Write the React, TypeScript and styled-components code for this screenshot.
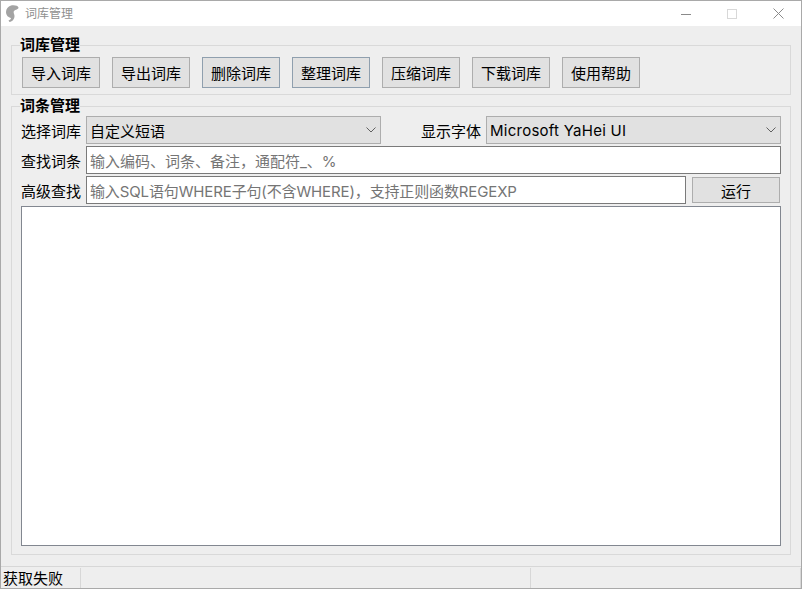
import styled, { createGlobalStyle } from 'styled-components';

const FONT = 'Inter, "Noto Sans CJK SC", sans-serif';

const GlobalStyle = createGlobalStyle`
  html, body {
    margin: 0;
    padding: 0;
    background: #ffffff;
  }
`;

const Frame = styled.div`
  width: 802px;
  height: 589px;
  box-sizing: border-box;
  border: 1px solid #a9a9a9;
  display: flex;
  flex-direction: column;
  background: #eeeeee;
  font-family: ${FONT};
  font-size: 15px;
  color: #000000;
  overflow: hidden;
`;

const TitleBar = styled.div`
  height: 25px;
  flex: none;
  background: #ffffff;
  display: flex;
  align-items: center;
  padding-left: 4px;
`;

const TitleText = styled.span`
  font-size: 12px;
  color: #8f8f8f;
  margin-left: 6px;
  padding-bottom: 2px;
  flex: 1;
`;

const WindowButton = styled.div`
  width: 46px;
  height: 25px;
  display: flex;
  align-items: center;
  justify-content: center;
`;

const Body = styled.div`
  flex: 1;
  min-height: 0;
  padding: 10px 10px 11px 10px;
  display: flex;
  flex-direction: column;
  gap: 2px;
`;

const Group = styled.fieldset<{ $grow?: boolean }>`
  margin: 0;
  padding: 0 9px 6px 9px;
  border: 1px solid #d9d9d9;
  min-width: 0;
  display: flex;
  flex-direction: column;
  ${({ $grow }) => ($grow ? 'flex: 1; min-height: 0; padding-bottom: 8px;' : '')}
`;

const Legend = styled.legend`
  font-size: 15px;
  font-weight: 700;
  line-height: 18px;
  padding: 0;
  margin-left: -1px;
  white-space: nowrap;
`;

const Toolbar = styled.div`
  display: flex;
  gap: 12px;
  padding: 3px 0 0 1px;
`;

const Button = styled.button<{ $focus?: boolean }>`
  width: 78px;
  height: 31px;
  box-sizing: border-box;
  border: 1px solid ${({ $focus }) => ($focus ? '#8f9fae' : '#adadad')};
  background: #e1e1e1;
  font: inherit;
  color: #000000;
  padding: 0;
`;

const Rows = styled.div`
  flex: 1;
  min-height: 0;
  display: flex;
  flex-direction: column;
  gap: 2px;
  padding-top: 1px;
`;

const Row = styled.div`
  display: flex;
  align-items: center;
  height: 28px;
  flex: none;
`;

const Label = styled.span<{ $gap?: number }>`
  width: 65px;
  flex: none;
  margin-left: ${({ $gap }) => $gap ?? 0}px;
  white-space: nowrap;
`;

const Combo = styled.div`
  width: 295px;
  height: 28px;
  box-sizing: border-box;
  flex: none;
  border: 1px solid #adadad;
  background: #e1e1e1;
  display: flex;
  align-items: center;
  justify-content: space-between;
  padding: 0 4px 0 3px;
`;

const FontName = styled.span`
  letter-spacing: 0.25px;
`;

const Field = styled.div<{ $tight?: boolean }>`
  flex: 1;
  min-width: 0;
  height: 28px;
  box-sizing: border-box;
  border: 1px solid #7a7a7a;
  background: #ffffff;
  display: flex;
  align-items: center;
  padding: 0 3px;
  color: #757575;
  white-space: nowrap;
  overflow: hidden;
  letter-spacing: ${({ $tight }) => ($tight ? '-0.13px' : 'normal')};
`;

const RunButton = styled(Button)`
  width: 88px;
  height: 26px;
  margin: 0 1px 0 6px;
  flex: none;
`;

const ListArea = styled.div`
  flex: 1;
  min-height: 0;
  border: 1px solid #828790;
  background: #ffffff;
`;

const StatusBar = styled.div`
  height: 21px;
  flex: none;
  border-top: 1px solid #d7d7d7;
  display: grid;
  grid-template-columns: 80px 450px 1fr;
  line-height: 22px;
`;

const StatusCell = styled.div`
  padding-left: 2px;
  margin-top: 1px;
  box-sizing: border-box;
  border-right: 1px solid #d7d7d7;
  white-space: nowrap;
`;

const Chevron = () => (
  <svg width="10" height="6" viewBox="0 0 10 6" fill="none" stroke="#606060" strokeWidth="1">
    <path d="M0.5 0.5 L5 5 L9.5 0.5" />
  </svg>
);

const AppLogo = () => (
  <svg width="14" height="18" viewBox="0 0 14 18">
    <path
      d="M6 0.5 C9 -0.2 13 0.5 13.5 2.5 C13.5 4.5 10.5 4.5 9 6 C8 7.5 9.5 9 9.5 11 C9.5 14 7.5 16.5 4.5 17 L3.5 15.5 C5 15 6 14 6 13 C3.5 12.5 1 10.5 1 7 C1 4 3 1.5 6 0.5 Z"
      fill="#a3a3a3"
    />
  </svg>
);

const TOOLS = ['导入词库', '导出词库', '删除词库', '整理词库', '压缩词库', '下载词库', '使用帮助'];

export default function App() {
  return (
    <>
      <GlobalStyle />
      <Frame>
        <TitleBar>
          <AppLogo />
          <TitleText>词库管理</TitleText>
          <WindowButton>
            <svg width="10" height="10" viewBox="0 0 10 10">
              <path d="M0 5.5 H10" stroke="#8a8a8a" strokeWidth="1" />
            </svg>
          </WindowButton>
          <WindowButton>
            <svg width="10" height="10" viewBox="0 0 10 10" fill="none">
              <rect x="0.5" y="0.5" width="9" height="9" stroke="#d8d8d8" />
            </svg>
          </WindowButton>
          <WindowButton>
            <svg width="11" height="11" viewBox="0 0 11 11" fill="none">
              <path d="M0.5 0.5 L10.5 10.5 M10.5 0.5 L0.5 10.5" stroke="#8a8a8a" strokeWidth="1" />
            </svg>
          </WindowButton>
        </TitleBar>
        <Body>
          <Group>
            <Legend>词库管理</Legend>
            <Toolbar>
              {TOOLS.map((t) => (
                <Button key={t} $focus={t === '删除词库' || t === '整理词库'}>
                  {t}
                </Button>
              ))}
            </Toolbar>
          </Group>
          <Group $grow>
            <Legend>词条管理</Legend>
            <Rows>
              <Row>
                <Label>选择词库</Label>
                <Combo>
                  <span>自定义短语</span>
                  <Chevron />
                </Combo>
                <Label $gap={40}>显示字体</Label>
                <Combo>
                  <FontName>Microsoft YaHei UI</FontName>
                  <Chevron />
                </Combo>
              </Row>
              <Row>
                <Label>查找词条</Label>
                <Field>输入编码、词条、备注，通配符_、%</Field>
              </Row>
              <Row>
                <Label>高级查找</Label>
                <Field $tight>输入SQL语句WHERE子句(不含WHERE)，支持正则函数REGEXP</Field>
                <RunButton>运行</RunButton>
              </Row>
              <ListArea />
            </Rows>
          </Group>
        </Body>
        <StatusBar>
          <StatusCell>获取失败</StatusCell>
          <StatusCell />
          <StatusCell />
        </StatusBar>
      </Frame>
    </>
  );
}
